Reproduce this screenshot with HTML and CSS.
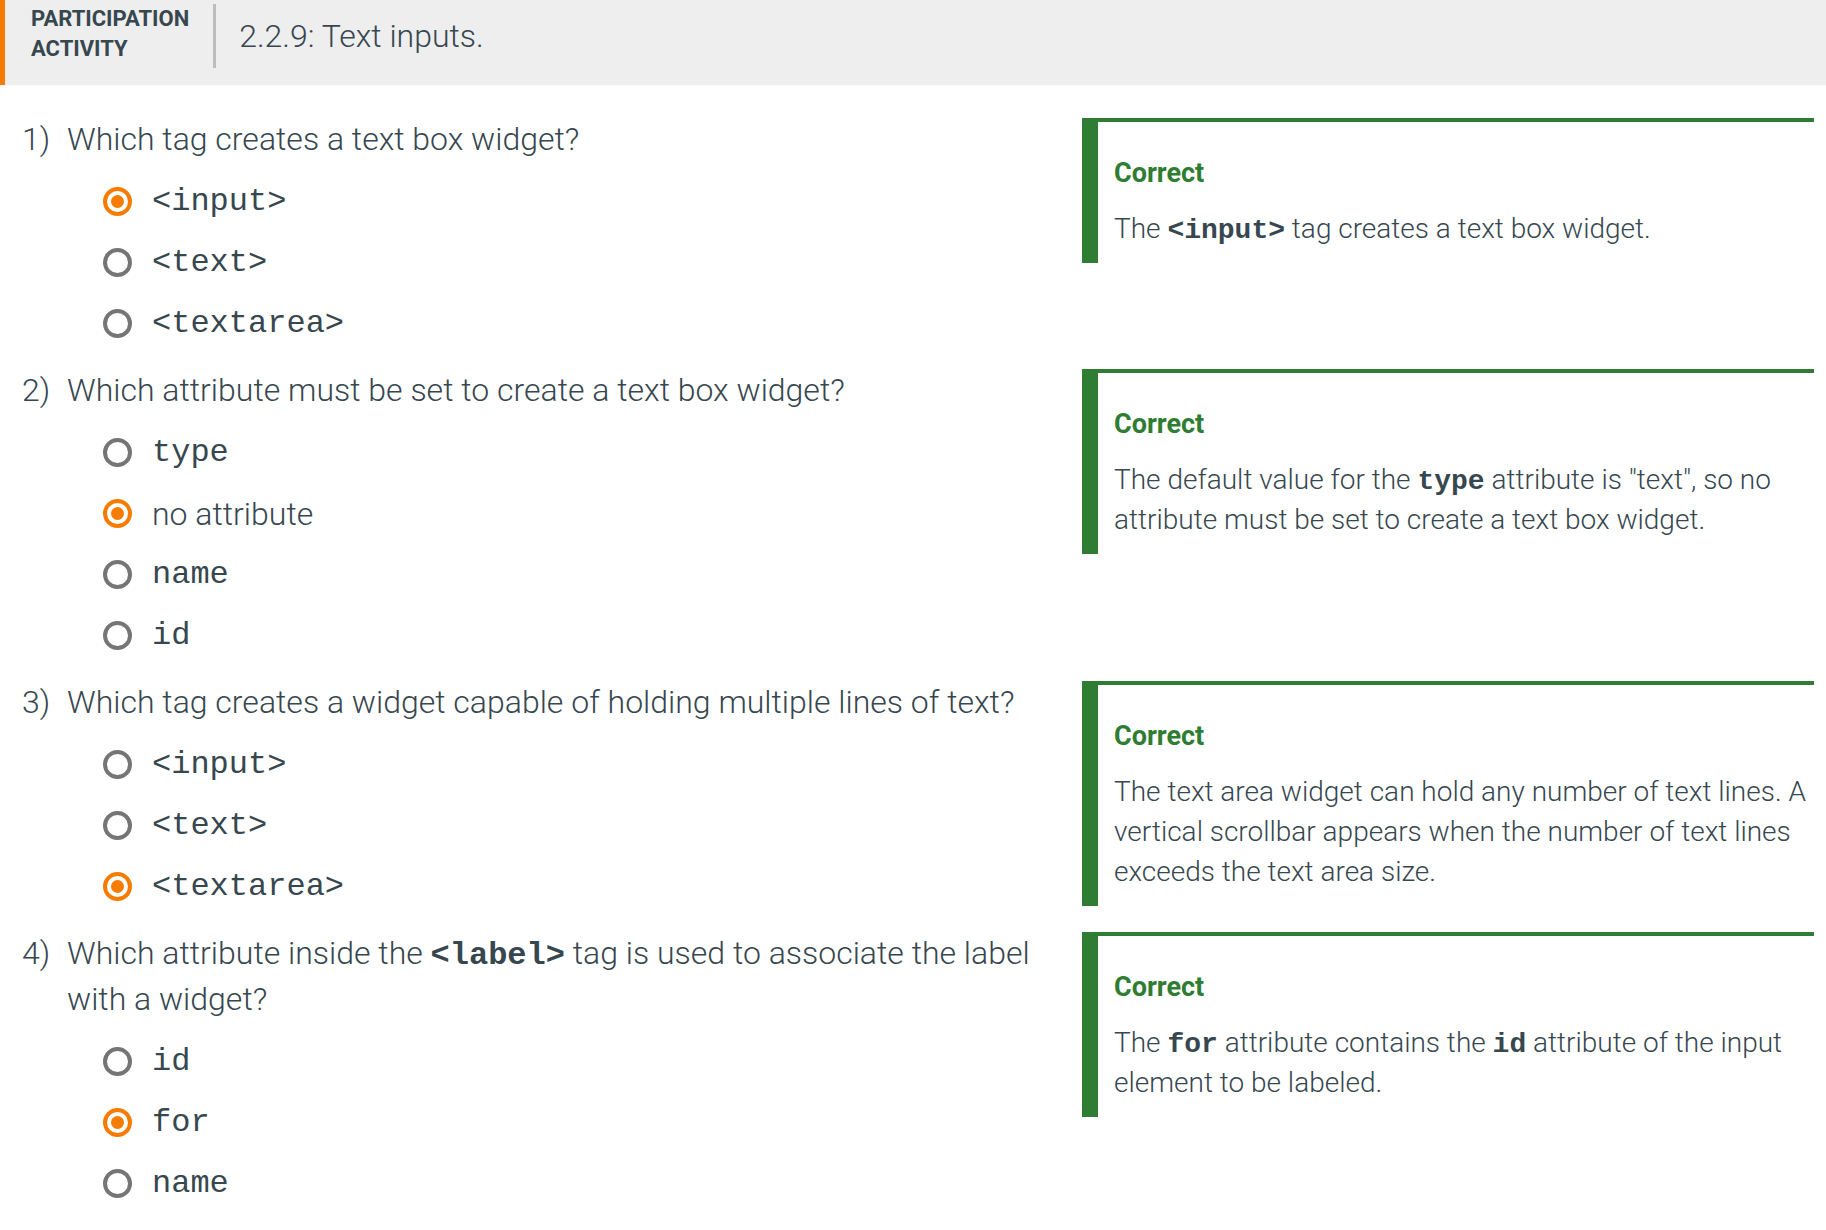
FILE: index.html
```html
<!DOCTYPE html>
<html>
<head>
<meta charset="utf-8">
<link rel="stylesheet" href="styles.css">
</head>
<body>
<div class="header">
  <div class="label">PARTICIPATION<br>ACTIVITY</div>
  <div class="sep"></div>
  <div class="title">2.2.9: Text inputs.</div>
</div>
<div class="questions">
  <div class="q-row">
    <div class="q-left">
      <div class="q-text"><span class="num">1)</span><span class="txt">Which tag creates a text box widget?</span></div>
      <div class="options">
        <div class="opt"><span class="radio sel"></span><span class="code">&lt;input&gt;</span></div>
        <div class="opt"><span class="radio"></span><span class="code">&lt;text&gt;</span></div>
        <div class="opt"><span class="radio"></span><span class="code">&lt;textarea&gt;</span></div>
      </div>
    </div>
    <div class="feedback">
      <div class="fb-head">Correct</div>
      <div class="fb-body">The <b class="kw">&lt;input&gt;</b> tag creates a text box widget.</div>
    </div>
  </div>

  <div class="q-row">
    <div class="q-left">
      <div class="q-text"><span class="num">2)</span><span class="txt">Which attribute must be set to create a text box widget?</span></div>
      <div class="options">
        <div class="opt"><span class="radio"></span><span class="code">type</span></div>
        <div class="opt"><span class="radio sel"></span><span class="plain">no attribute</span></div>
        <div class="opt"><span class="radio"></span><span class="code">name</span></div>
        <div class="opt"><span class="radio"></span><span class="code">id</span></div>
      </div>
    </div>
    <div class="feedback">
      <div class="fb-head">Correct</div>
      <div class="fb-body">The default value for the <b class="kw">type</b> attribute is "text", so no attribute must be set to create a text box widget.</div>
    </div>
  </div>

  <div class="q-row">
    <div class="q-left">
      <div class="q-text"><span class="num">3)</span><span class="txt">Which tag creates a widget capable of holding multiple lines of text?</span></div>
      <div class="options">
        <div class="opt"><span class="radio"></span><span class="code">&lt;input&gt;</span></div>
        <div class="opt"><span class="radio"></span><span class="code">&lt;text&gt;</span></div>
        <div class="opt"><span class="radio sel"></span><span class="code">&lt;textarea&gt;</span></div>
      </div>
    </div>
    <div class="feedback">
      <div class="fb-head">Correct</div>
      <div class="fb-body">The text area widget can hold any number of text lines. A vertical scrollbar appears when the number of text lines exceeds the text area size.</div>
    </div>
  </div>

  <div class="q-row">
    <div class="q-left">
      <div class="q-text"><span class="num">4)</span><span class="txt">Which attribute inside the <b class="kw">&lt;label&gt;</b> tag is used to associate the label with a widget?</span></div>
      <div class="options">
        <div class="opt"><span class="radio"></span><span class="code">id</span></div>
        <div class="opt"><span class="radio sel"></span><span class="code">for</span></div>
        <div class="opt"><span class="radio"></span><span class="code">name</span></div>
      </div>
    </div>
    <div class="feedback">
      <div class="fb-head">Correct</div>
      <div class="fb-body">The <b class="kw">for</b> attribute contains the <b class="kw">id</b> attribute of the input element to be labeled.</div>
    </div>
  </div>
</div>
</body>
</html>
```

FILE: styles.css
```css
html, body {
  margin: 0;
  padding: 0;
  background: #ffffff;
}
body {
  font-family: Roboto, "Noto Sans", sans-serif;
  color: #37474f;
}
.header {
  display: flex;
  align-items: flex-start;
  height: 85px;
  box-sizing: border-box;
  background: #eeeeee;
  border-left: 5px solid #f57c00;
  padding: 4px 0 0 26px;
}
.label {
  font-size: 22px;
  font-weight: 700;
  line-height: 30px;
  color: #37474f;
}
.sep {
  width: 3px;
  height: 64px;
  background: #bdbdbd;
  margin: 0 23px 0 24px;
}
.title {
  font-size: 32px;
  font-weight: 300;
  line-height: 40px;
  margin-top: 12px;
}
.questions {
  padding: 31px 12px 0 22px;
}
.q-row {
  display: grid;
  grid-template-columns: 1fr 732px;
  column-gap: 22px;
  margin-bottom: 13px;
  align-items: start;
}
.q-text {
  display: flex;
  font-size: 32px;
  font-weight: 300;
  line-height: 46px;
}
.num {
  flex: 0 0 45px;
}
.txt {
  flex: 1;
}
.options {
  margin-top: 9px;
  padding-left: 81px;
}
.opt {
  display: flex;
  align-items: center;
  height: 61px;
}
.radio {
  box-sizing: border-box;
  width: 29px;
  height: 29px;
  border-radius: 50%;
  border: 4px solid #757575;
  margin-right: 20px;
  flex: 0 0 auto;
  position: relative;
}
.radio.sel {
  border: 4px solid #f57c00;
}
.radio.sel::after {
  content: "";
  position: absolute;
  left: 50%;
  top: 50%;
  width: 13px;
  height: 13px;
  margin: -6.5px 0 0 -6.5px;
  border-radius: 50%;
  background: #f57c00;
}
.code {
  font-family: "Liberation Mono", "Courier New", monospace;
  font-size: 32px;
  color: #37474f;
}
.plain {
  font-size: 32px;
  font-weight: 300;
}
.kw {
  font-family: "Liberation Mono", "Courier New", monospace;
  font-weight: 700;
  font-size: 1em;
  line-height: 1;
}
.feedback {
  margin-top: 2px;
  border-left: 16px solid #2e7d32;
  border-top: 4px solid #2e7d32;
  padding: 36px 0 14px 16px;
}
.fb-head {
  font-size: 27px;
  font-weight: 700;
  line-height: 30px;
  color: #2e7d32;
}
.fb-body {
  margin-top: 21px;
  font-size: 28px;
  font-weight: 300;
  line-height: 40px;
}
```
